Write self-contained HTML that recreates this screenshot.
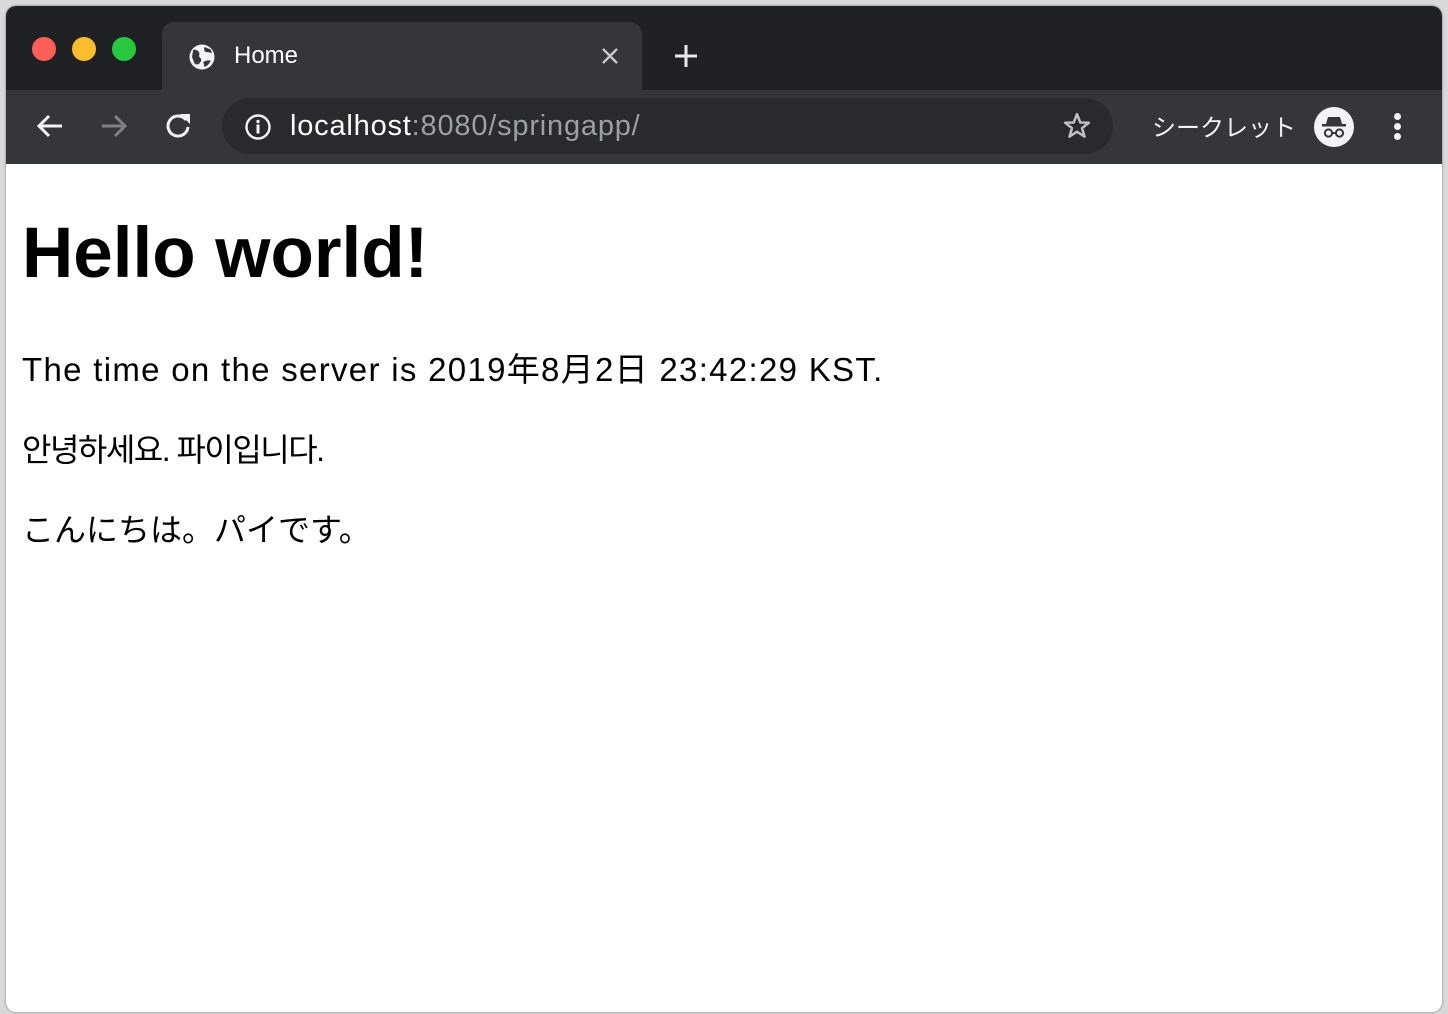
<!DOCTYPE html>
<html><head><meta charset="utf-8"><style>
html,body{margin:0;padding:0;width:1448px;height:1014px;overflow:hidden;background:#d9d9d9;font-family:"Liberation Sans","Noto Sans CJK JP",sans-serif}
.abs{position:absolute}
#win{left:6px;top:6px;width:1436px;height:1006px;border-radius:10px;overflow:hidden;background:#fff;box-shadow:0 0 2px rgba(0,0,0,.5)}
#strip{left:0;top:0;width:1436px;height:84px;background:#202124}
#tab{left:156px;top:16px;width:480px;height:68px;background:#35363a;border-radius:12px 12px 0 0}
#bar{left:0;top:84px;width:1436px;height:74px;background:#35363a}
#omni{left:216px;top:92px;width:891px;height:56px;background:#292a2d;border-radius:28px}
.dot{width:24px;height:24px;border-radius:50%;top:31px}
.t{color:#fff}
.txt{left:16px;color:#000;white-space:nowrap}
</style></head><body>
<div id="win" class="abs">
 <div id="strip" class="abs"></div>
 <div class="abs dot" style="left:26px;background:#ff5f57"></div>
 <div class="abs dot" style="left:66px;background:#febc2e"></div>
 <div class="abs dot" style="left:106px;background:#28c840"></div>
 <div id="tab" class="abs"></div>
 <svg class="abs" style="left:181px;top:36px" width="30" height="30" viewBox="0 0 24 24"><circle cx="12" cy="12" r="10" fill="#f1f3f4"/><path d="M5 6 Q9 6 10 9 Q9 12 11 13 Q12 15 10 17 Q8 19 6 17 L4 12Z M14 4 Q13 7 15 8 Q18 8 20 9 L19 6Z M13 16 Q16 14 19 15 Q17 19 14 20Z" fill="#35363a"/></svg>
 <div class="abs t" style="left:228px;top:36px;font-size:24px">Home</div>
 <svg class="abs" style="left:594px;top:40px" width="20" height="20" viewBox="0 0 20 20"><path d="M3 3L17 17M17 3L3 17" stroke="#c8c9cb" stroke-width="2.4"/></svg>
 <svg class="abs" style="left:666px;top:36px" width="28" height="28" viewBox="0 0 28 28"><path d="M14 3V25M3 14H25" stroke="#e8eaed" stroke-width="3"/></svg>
 <div id="bar" class="abs"></div>
 <svg class="abs" style="left:28px;top:106px" width="32" height="28" viewBox="0 0 32 28"><path d="M28 14H5M15 4L5 14L15 24" stroke="#f1f3f4" stroke-width="3" fill="none"/></svg>
 <svg class="abs" style="left:92px;top:106px" width="32" height="28" viewBox="0 0 32 28"><path d="M4 14H27M17 4L27 14L17 24" stroke="#7f8184" stroke-width="3" fill="none"/></svg>
 <svg class="abs" style="left:156px;top:104px" width="32" height="32" viewBox="0 0 32 32"><path d="M24 10A10 10 0 1 0 26 17" stroke="#f1f3f4" stroke-width="3" fill="none"/><path d="M18 4H28V14Z" fill="#f1f3f4"/></svg>
 <div id="omni" class="abs"></div>
 <svg class="abs" style="left:238px;top:107px" width="28" height="28" viewBox="0 0 28 28"><circle cx="14" cy="14" r="11.5" stroke="#f1f3f4" stroke-width="2.4" fill="none"/><circle cx="14" cy="8.5" r="1.7" fill="#f1f3f4"/><rect x="12.5" y="11.5" width="3" height="9" fill="#f1f3f4"/></svg>
 <div class="abs" style="left:284px;top:104px;font-size:29px;color:#fff;white-space:nowrap;letter-spacing:0.8px">localhost<span style="color:#9aa0a6">:8080/springapp/</span></div>
 <svg class="abs" style="left:1056px;top:105px" width="30" height="30" viewBox="0 0 24 24"><path d="M12 2.5L14.6 9.2L21.5 9.4L16 13.7L18 20.5L12 16.5L6 20.5L8 13.7L2.5 9.4L9.4 9.2Z" stroke="#bdc1c6" stroke-width="2" fill="none" stroke-linejoin="round"/></svg>
 <div class="abs" style="left:1146px;top:105px;font-size:24px;color:#f1f3f4;font-family:'Noto Sans CJK JP',sans-serif;line-height:30px">シークレット</div>
 <svg class="abs" style="left:1307px;top:100px" width="42" height="42" viewBox="0 0 42 42"><circle cx="21" cy="21" r="20" fill="#f1f3f4"/><path d="M15 11H27L29 18H13Z" fill="#35363a"/><rect x="9" y="18" width="24" height="2.5" fill="#35363a"/><circle cx="15.5" cy="27" r="3.6" stroke="#35363a" stroke-width="2" fill="none"/><circle cx="26.5" cy="27" r="3.6" stroke="#35363a" stroke-width="2" fill="none"/><path d="M19 27H23" stroke="#35363a" stroke-width="2"/></svg>
 <div class="abs" style="left:1388px;top:107px;width:7px;height:7px;border-radius:50%;background:#f1f3f4"></div>
 <div class="abs" style="left:1388px;top:117px;width:7px;height:7px;border-radius:50%;background:#f1f3f4"></div>
 <div class="abs" style="left:1388px;top:127px;width:7px;height:7px;border-radius:50%;background:#f1f3f4"></div>

 <div class="abs txt" style="top:208px;font-size:71px;font-weight:bold;line-height:80px">Hello world!</div>
 <div class="abs txt" style="top:344px;font-size:33px;line-height:40px;letter-spacing:1.3px">The time on the server is 2019年8月2日 23:42:29 KST.</div>
 <div class="abs txt" style="top:424px;font-size:32px;line-height:40px;letter-spacing:-1.5px;font-family:'Liberation Sans','Noto Sans CJK KR',sans-serif">안녕하세요. 파이입니다.</div>
 <div class="abs txt" style="top:502px;font-size:32px;line-height:40px;font-family:'Noto Sans CJK JP',sans-serif">こんにちは。パイです。</div>
</div>
</body></html>
